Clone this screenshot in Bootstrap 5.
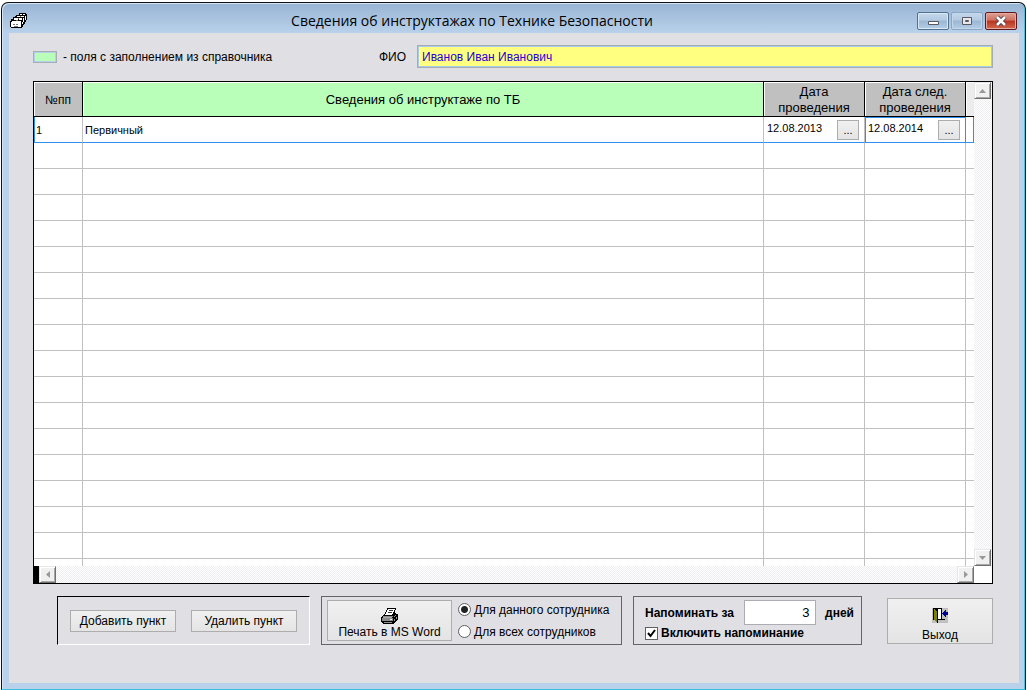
<!DOCTYPE html>
<html lang="ru">
<head>
<meta charset="utf-8">
<meta name="viewport" content="width=device-width, initial-scale=1">
<title>Сведения об инструктажах по Технике Безопасности</title>
<link href="https://cdn.jsdelivr.net/npm/bootstrap@5.3.0/dist/css/bootstrap.min.css" rel="stylesheet">
<style>
body{font:12px/16px "Liberation Sans",Arial,sans-serif;color:#000;background:#fff;padding:2px 1px 0}
.win{border:1px solid #111;border-bottom:1px solid #3cc0e0;border-radius:7px 7px 0 0;background:linear-gradient(#98b4d4,#b9d1ea 30px);padding:0 6px 6px 7px;box-shadow:inset 1px 1px #d5e5f5,inset -1px 0 #45c4e4;min-height:calc(100vh - 2px)}
.titlebar{height:30px;padding:5px 2px 0 1px}
.caption{font:14px/20px "Open Sans","Noto Sans",sans-serif;margin:0}
.wbtn{width:32px;height:18px;padding:0;border:1px solid #54708f;border-radius:2px;background:linear-gradient(#c5d8ec,#b3cae2 45%,#9ab6d3 50%,#b5cee8);box-shadow:inset 0 0 0 1px #dbe8f5;display:flex;align-items:center;justify-content:center}
.wbtn-dim{border-color:#8ba6c4;box-shadow:inset 0 0 0 1px #c3d6ea}
.wbtn-close{border-color:#5d1a1c;background:linear-gradient(#e0a095,#d0705f 45%,#b8341f 50%,#d2694f);box-shadow:inset 0 0 0 1px #e5aaa0}
.winbtns{gap:2px}
.client{background:#e0dfe4;padding:12px 26px 38px 24px}
.swatch{width:24px;height:12px;background:#b9ffb9;border:1px solid #a9adb8;box-shadow:inset 0 0 0 1px #b5cfe8}
.legend-text{width:318px;padding-left:6px}
.fio{height:23px;padding:0 4px;color:#2a00d8;background:#ffff80;border:1px solid #a5acb5;box-shadow:inset 0 0 0 1px #a9cbea}
.fio-label{width:42px;padding-left:4px}
.gridbox{border:1px solid #000;background:#fff;flex:1 1 0;min-height:200px;margin-top:13px}
.gridbody{flex:1 1 0;min-height:0}
.rows{overflow:hidden;flex:1 1 0}
.journal{table-layout:fixed;width:100%;border-collapse:separate;border-spacing:0}
.journal th{height:35px;padding:1px 4px 0;font-size:13px;font-weight:400;text-align:center;background:#c0c0c0;border-right:1px solid #000;border-bottom:1px solid #000;box-shadow:inset 1px 1px #fff}
.journal th:first-child{font-size:12px}
.journal th.ref{background:#b9ffb9}
.journal th:last-child{background:#ececec;border-right:0}
.journal td{height:26px;padding:0 2px;border-right:1px solid #c0c0c0;border-bottom:1px solid #c0c0c0;font-size:11px}
.journal td:last-child{border-right:0}
.journal tr.current td{border-bottom-color:#3090f0}
.journal tr.current td:first-child{box-shadow:inset 1px 0 #3090f0}
.journal tr.current td:last-child{border-right:1px solid #3090f0}
.journal tr.current td.focused{border-right-color:#3090f0;box-shadow:inset 1px 1px #3090f0}
.col-num{width:49px}.col-date{width:101px}.col-rest{width:8px}
.datecell{gap:4px;padding:0 3px 0 1px}
.datebox{width:66px;height:16px;padding:0;border:0;background:transparent;font-size:11px;color:#000}
.face{border:1px solid #adadad;background:linear-gradient(#f0f0f0,#e4e4e4);border-radius:0;padding:0;color:#000}
.dots{width:22px;height:20px;font-size:11px}
.vbar{width:18px;padding-right:1px}
.track{background:repeating-conic-gradient(#fff 0 25%,#eeedf0 0 50%) 0 0/2px 2px}
.arrow{width:17px;height:17px;padding:0;border:1px solid;border-color:#e6e6e6 #707070 #707070 #e6e6e6;background:#f0f0f0;box-shadow:inset 1px 1px #fff,inset -1px -1px #a8a8a8;display:flex;align-items:center;justify-content:center;flex:none}
.hbar{height:17px}
.stub{width:5px;background:#000}
.controls{margin:12px 0 0 24px;gap:11px}
.panel{height:49px;border:1px solid #646468}
.sunk{width:253px;border-color:#000 #fff #fff #000}
.cmd{width:106px;height:22px}
.print{width:301px;padding-left:5px;gap:6px}
.word{width:125px;height:41px}
.radios{gap:6px}
.radios label,.remind label{gap:3px}
.exit{width:106px;height:46px}
.opt{width:13px;height:13px;margin:0;flex:none;appearance:none;border:1px solid #606060;background:#fff}
.opt[type=radio]{border-radius:50%}
.opt[type=radio]:checked{background:radial-gradient(circle,#222 0 3px,#fff 4px)}
.opt[type=checkbox]:checked{background:#fff url("data:image/svg+xml,%3Csvg xmlns='http://www.w3.org/2000/svg' viewBox='0 0 11 11'%3E%3Cpath d='M2 5l2.5 3L9 2' fill='none' stroke='%23000' stroke-width='2'/%3E%3C/svg%3E")}
.days{width:72px;height:25px;text-align:right;padding:0 5px;border:1px solid #abadb3;background:#fff;font-size:13px}
.remind{width:229px;padding:3px 7px 0 11px}
</style>
</head>
<body>
<main class="win d-flex flex-column">
  <header class="titlebar d-flex align-items-center">
    <svg width="17" height="16" viewBox="0 0 17 16" shape-rendering="crispEdges"><path d="M9 0h7v1h1v6h-1v2h-1v2h-1v1h-1v2h-1v1H1v-1H0V8h1V6h2V4h2V3h1V2h3z" fill="#000"/><path d="M2 8h9v6H2zM1 9h1v5H1zM4 5h4v2H4zM9 5h3v2H9zM7 3h3v1H7zM11 3h3v1h-3zM10 1h2v1h-2zM13 1h2v1h-2zM12 9h1v2h-1zM13 5h1v4h-1zM15 3h1v4h-1z" fill="#fff"/><path d="M3 11h2v1H3zM6 11h2v1H6zM4 13h4v1H4z" fill="#777"/><path d="M6 7h2v1H6zM8 5h1v1H8zM10 3h1v1h-1z" fill="#8a6a38"/></svg>
    <h1 class="caption flex-fill text-center">Сведения об инструктажах по Технике Безопасности</h1>
    <div class="d-flex winbtns">
      <button class="wbtn" type="button" aria-label="Свернуть"><svg width="12" height="12"><path d="M1.500 6.500h10v3h-10z" fill="#fff" stroke="#585860"/></svg></button>
      <button class="wbtn wbtn-dim" type="button" aria-label="Развернуть"><svg width="12" height="12"><path d="M1.500 2.500h9v7h-9z" fill="#e8e8ec" stroke="#585860"/><path d="M4.500 5.500h3v1h-3z" fill="#b5cbe2" stroke="#585860"/></svg></button>
      <button class="wbtn wbtn-close" type="button" aria-label="Закрыть"><svg width="14" height="12" viewBox="0 0 14 12"><path d="M3 2l8 8M11 2l-8 8" stroke="#4a4048" stroke-width="4.500"/><path d="M3 2l8 8M11 2l-8 8" stroke="#fff" stroke-width="2.500"/></svg></button>
    </div>
  </header>

  <form class="client d-flex flex-column flex-fill">
    <div class="d-flex align-items-center">
      <span class="swatch"></span>
      <span class="legend-text">- поля с заполнением из справочника</span>
      <label class="fio-label" for="fio">ФИО</label>
      <input class="fio flex-fill" id="fio" type="text" value="Иванов Иван Иванович">
    </div>

    <section class="gridbox d-flex flex-column">
      <div class="gridbody d-flex">
        <div class="rows">
          <table class="journal">
            <colgroup><col class="col-num"><col><col class="col-date"><col class="col-date"><col class="col-rest"></colgroup>
            <thead><tr><th>№пп</th><th class="ref">Сведения об инструктаже по ТБ</th><th>Дата проведения</th><th>Дата след. проведения</th><th></th></tr></thead>
            <tbody>
              <tr class="current">
                <td>1</td><td>Первичный</td>
                <td><div class="datecell d-flex"><input class="datebox" type="text" value="12.08.2013" aria-label="Дата проведения"><button class="face dots" type="button">...</button></div></td>
                <td class="focused"><div class="datecell d-flex"><input class="datebox" type="text" value="12.08.2014" aria-label="Дата след. проведения"><button class="face dots" type="button">...</button></div></td>
                <td></td>
              </tr>
              <tr><td></td><td></td><td></td><td></td><td></td></tr>
              <tr><td></td><td></td><td></td><td></td><td></td></tr>
              <tr><td></td><td></td><td></td><td></td><td></td></tr>
              <tr><td></td><td></td><td></td><td></td><td></td></tr>
              <tr><td></td><td></td><td></td><td></td><td></td></tr>
              <tr><td></td><td></td><td></td><td></td><td></td></tr>
              <tr><td></td><td></td><td></td><td></td><td></td></tr>
              <tr><td></td><td></td><td></td><td></td><td></td></tr>
              <tr><td></td><td></td><td></td><td></td><td></td></tr>
              <tr><td></td><td></td><td></td><td></td><td></td></tr>
              <tr><td></td><td></td><td></td><td></td><td></td></tr>
              <tr><td></td><td></td><td></td><td></td><td></td></tr>
              <tr><td></td><td></td><td></td><td></td><td></td></tr>
              <tr><td></td><td></td><td></td><td></td><td></td></tr>
              <tr><td></td><td></td><td></td><td></td><td></td></tr>
              <tr><td></td><td></td><td></td><td></td><td></td></tr>
              <tr><td></td><td></td><td></td><td></td><td></td></tr>
            </tbody>
          </table>
        </div>
        <div class="vbar track d-flex flex-column justify-content-between">
          <button class="arrow" type="button" aria-label="Вверх"><svg width="7" height="4"><path d="M0 4l3.500-4L7 4z" fill="#999"/></svg></button>
          <button class="arrow" type="button" aria-label="Вниз"><svg width="7" height="4"><path d="M0 0l3.500 4L7 0z" fill="#999"/></svg></button>
        </div>
      </div>
      <div class="hbar d-flex">
        <span class="stub"></span>
        <div class="track d-flex flex-fill justify-content-between">
          <button class="arrow" type="button" aria-label="Влево"><svg width="4" height="7"><path d="M4 0L0 3.500 4 7z" fill="#999"/></svg></button>
          <button class="arrow" type="button" aria-label="Вправо"><svg width="4" height="7"><path d="M0 0l4 3.500L0 7z" fill="#999"/></svg></button>
        </div>
        <span class="vbar"></span>
      </div>
    </section>

    <div class="controls d-flex align-items-center">
      <div class="panel sunk d-flex align-items-center justify-content-between px-2 py-0">
        <button class="face cmd ms-1" type="button">Добавить пункт</button>
        <button class="face cmd me-1" type="button">Удалить пункт</button>
      </div>
      <div class="panel print d-flex align-items-center">
        <button class="face word d-flex flex-column align-items-center justify-content-end" type="button">
          <svg width="18" height="16" viewBox="0 0 18 16" shape-rendering="crispEdges"><path d="M6 0h9v2h-1v3h1v1h2v6h-1v1h-1v1h-1v1h-1v1H2v-1H1v-1H0V9h1V8h1V7h1V6h1V4h1V2h1z" fill="#000"/><path d="M7 1h7v1h-1v2h-1v2h-1v1H4V6h1V4h1V2h1z" fill="#fff"/><path d="M8 2h4v1H8zM7 4h4v1H7z" fill="#333"/><path d="M2 8h10v1H2zM1 10h11v3H1z" fill="#8a8a8a"/><path d="M2 9h9v1H2z" fill="#aaa"/><path d="M3 14h8v1H3z" fill="#909090"/><path d="M13 8h1v1h-1zM14 7h1v1h-1zM13 11h1v2h-1zM15 9h1v2h-1z" fill="#999"/><path d="M9 11h2v1H9z" fill="#eee"/></svg>
          Печать в MS Word
        </button>
        <div class="d-flex flex-column radios">
          <label class="d-flex align-items-center" for="one"><input class="opt" type="radio" name="who" id="one" checked>Для данного сотрудника</label>
          <label class="d-flex align-items-center" for="all"><input class="opt" type="radio" name="who" id="all">Для всех сотрудников</label>
        </div>
      </div>
      <div class="panel remind fw-bold">
        <div class="d-flex align-items-center justify-content-between">
          <label for="days">Напоминать за</label>
          <input class="days" id="days" type="text" value="3">
          <span>дней</span>
        </div>
        <label class="d-flex align-items-center" for="on"><input class="opt" type="checkbox" id="on" checked>Включить напоминание</label>
      </div>
      <button class="face exit d-flex flex-column align-items-center justify-content-end ms-auto" type="button">
        <svg class="mb-1" width="16" height="16" viewBox="0 0 16 16" shape-rendering="crispEdges"><path d="M0 1h16v15H0z" fill="#c0c0c0"/><path d="M1 1h9v11h3v1H6v3H5v-1H4v-1H3v-1H1z" fill="#000"/><path d="M6 2h3v10H6z" fill="#fff"/><path d="M2 2h1v1h1v1h1v11H4v-1H3v-1H2z" fill="#808000"/><path d="M10 6h1V5h1V4h1V3h1v2h2v3h-2v2h-1V9h-1V8h-1V7h-1z" fill="#000090"/></svg>
        Выход
      </button>
    </div>
  </form>
</main>
<script src="https://cdn.jsdelivr.net/npm/bootstrap@5.3.0/dist/js/bootstrap.bundle.min.js"></script>
</body>
</html>
